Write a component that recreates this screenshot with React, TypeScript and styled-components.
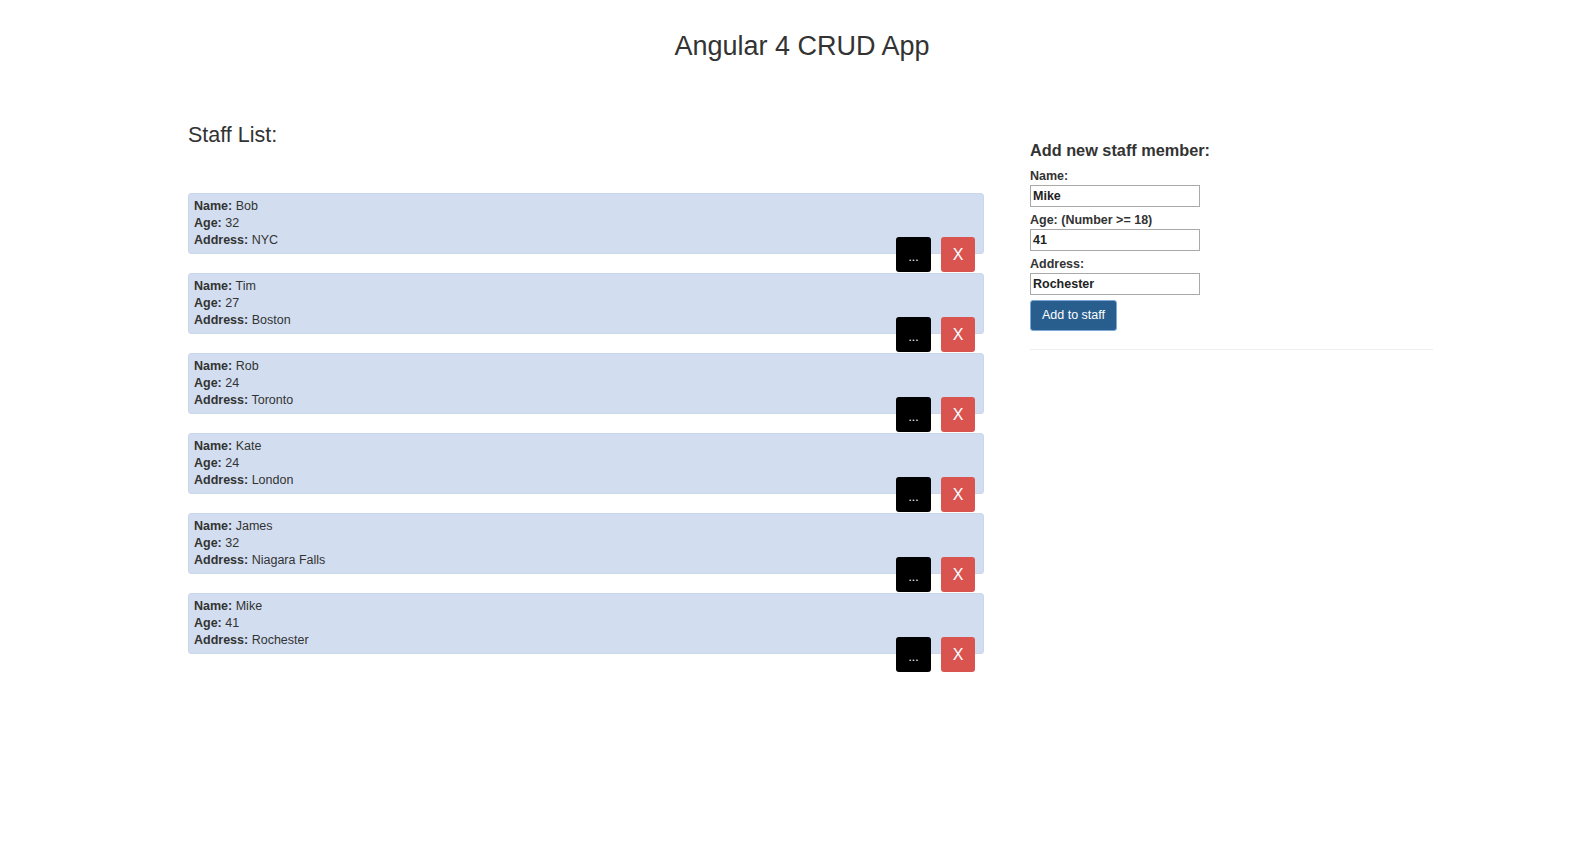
import React from "react";
import styled, { createGlobalStyle } from "styled-components";

const Global = createGlobalStyle`
  html, body { margin: 0; padding: 0; background: #fff; }
  body {
    font-family: "Liberation Sans", Arial, Helvetica, sans-serif;
    color: #333;
    font-size: 12.5px;
    line-height: 17px;
  }
  * { box-sizing: border-box; }
`;

const Page = styled.div`
  width: 1228px;
  margin-left: 188px;
  padding-top: 30px;
`;

const Title = styled.h1`
  margin: 0;
  font-size: 27px;
  font-weight: 500;
  line-height: 32px;
  text-align: center;
  color: #333;
`;

const Columns = styled.div`
  display: flex;
  align-items: flex-start;
  gap: 46px;
  margin-top: 60px;
`;

const ListColumn = styled.section`
  width: 796px;
  flex: none;
`;

const FormColumn = styled.section`
  width: 403px;
  flex: none;
  padding-top: 18px;
`;

const ListHeading = styled.h3`
  margin: 0 0 45px;
  font-size: 21.5px;
  font-weight: 500;
  line-height: 26px;
  color: #333;
`;

const Entry = styled.div`
  display: flex;
  flex-direction: column;
  margin-bottom: 1px;
`;

const Card = styled.div`
  background: #d2def0;
  border: 1px solid #cad7eb;
  border-radius: 3px;
  padding: 4px 5px;
  height: 61px;
`;

const Line = styled.div`
  white-space: nowrap;
`;

const Key = styled.b`
  font-weight: 700;
`;

const Actions = styled.div`
  display: flex;
  justify-content: flex-end;
  gap: 10px;
  padding-right: 9px;
  margin-top: -17px;
`;

const ActionButton = styled.button<{ $tone: "dark" | "danger" }>`
  width: ${(p) => (p.$tone === "dark" ? "35px" : "34px")};
  height: 35px;
  border: none;
  border-radius: 3px;
  padding: 0;
  font-family: "Liberation Sans", Arial, sans-serif;
  color: #fff;
  background: ${(p) => (p.$tone === "dark" ? "#000" : "#d9534f")};
  font-size: ${(p) => (p.$tone === "dark" ? "12px" : "16px")};
  line-height: ${(p) => (p.$tone === "dark" ? "41px" : "35px")};
  cursor: pointer;
`;

const FormHeading = styled.h4`
  margin: 0 0 8px;
  font-size: 16.3px;
  font-weight: 700;
  line-height: 20px;
  color: #333;
`;

const Field = styled.label`
  display: block;
  font-weight: 700;
  font-size: 12.5px;
  line-height: 17px;
`;

const LabelText = styled.span`
  display: block;
`;

const Input = styled.input`
  display: block;
  width: 170px;
  height: 22px;
  margin: 0 0 5px;
  padding: 1px 2px;
  border: 1px solid #a9a9a9;
  font-family: "Liberation Sans", Arial, sans-serif;
  font-size: 12.5px;
  font-weight: 700;
  color: #222;
  background: #fff;
  outline: none;
`;

const SubmitButton = styled.button`
  display: block;
  width: 87px;
  height: 31px;
  margin-top: 0;
  padding: 0;
  border: 1px solid #7fa9d6;
  border-radius: 3px;
  background: #285e8e;
  color: #fff;
  font-family: "Liberation Sans", Arial, sans-serif;
  font-size: 12.5px;
  line-height: 27px;
  cursor: pointer;
`;

const Rule = styled.hr`
  margin: 18px 0 0;
  border: 0;
  border-top: 1px solid #eee;
`;

type Staff = { name: string; age: number; address: string };

const staff: Staff[] = [
  { name: "Bob", age: 32, address: "NYC" },
  { name: "Tim", age: 27, address: "Boston" },
  { name: "Rob", age: 24, address: "Toronto" },
  { name: "Kate", age: 24, address: "London" },
  { name: "James", age: 32, address: "Niagara Falls" },
  { name: "Mike", age: 41, address: "Rochester" },
];

export default function App() {
  return (
    <>
      <Global />
      <Page>
        <Title>Angular 4 CRUD App</Title>
        <Columns>
          <ListColumn>
            <ListHeading>Staff List:</ListHeading>
            {staff.map((s) => (
              <Entry key={s.name}>
                <Card>
                  <Line>
                    <Key>Name:</Key> {s.name}
                  </Line>
                  <Line>
                    <Key>Age:</Key> {s.age}
                  </Line>
                  <Line>
                    <Key>Address:</Key> {s.address}
                  </Line>
                </Card>
                <Actions>
                  <ActionButton $tone="dark">...</ActionButton>
                  <ActionButton $tone="danger">X</ActionButton>
                </Actions>
              </Entry>
            ))}
          </ListColumn>
          <FormColumn>
            <FormHeading>Add new staff member:</FormHeading>
            <Field>
              <LabelText>Name:</LabelText>
              <Input defaultValue="Mike" />
            </Field>
            <Field>
              <LabelText>Age: (Number &gt;= 18)</LabelText>
              <Input defaultValue="41" />
            </Field>
            <Field>
              <LabelText>Address:</LabelText>
              <Input defaultValue="Rochester" />
            </Field>
            <SubmitButton>Add to staff</SubmitButton>
            <Rule />
          </FormColumn>
        </Columns>
      </Page>
    </>
  );
}
